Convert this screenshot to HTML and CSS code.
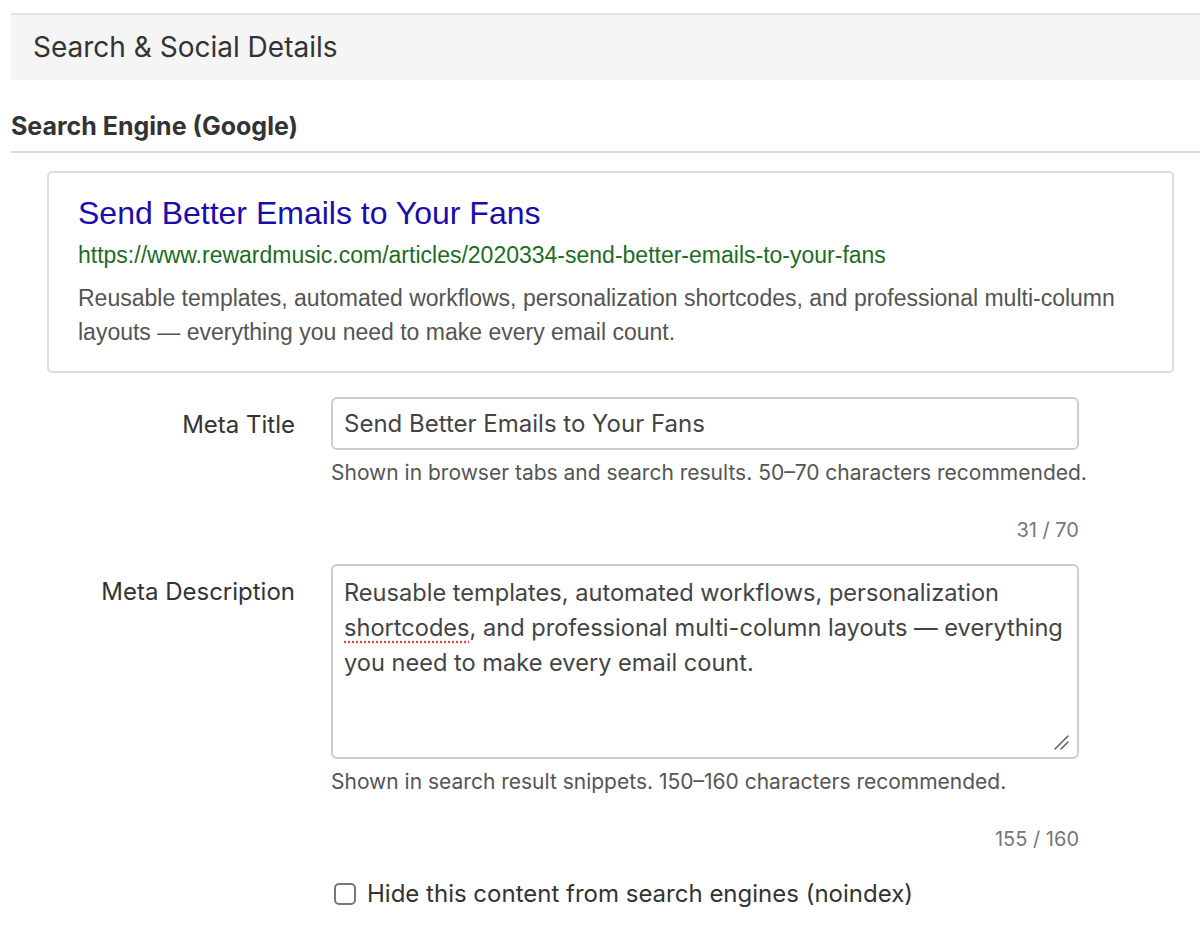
FILE: index.html
```html
<!DOCTYPE html>
<html lang="en">
<head>
<meta charset="utf-8">
<title>Search &amp; Social Details</title>
<link rel="stylesheet" href="styles.css">
</head>
<body>
<div class="page">
  <div class="panel-header">Search &amp; Social Details</div>
  <h3 class="section-title">Search Engine (Google)</h3>
  <div class="serp">
    <div class="serp-title">Send Better Emails to Your Fans</div>
    <div class="serp-url">https://www.rewardmusic.com/articles/2020334-send-better-emails-to-your-fans</div>
    <div class="serp-desc">Reusable templates, automated workflows, personalization shortcodes, and professional multi-column layouts — everything you need to make every email count.</div>
  </div>
  <div class="form">
    <div class="row">
      <label class="label" for="mt">Meta Title</label>
      <div class="field">
        <input id="mt" class="input" type="text" value="Send Better Emails to Your Fans">
        <div class="help">Shown in browser tabs and search results. 50–70 characters recommended.</div>
        <div class="counter">31 / 70</div>
      </div>
    </div>
    <div class="row">
      <label class="label" for="md">Meta Description</label>
      <div class="field">
        <div class="textarea">Reusable templates, automated workflows, personalization <span class="spell">shortcodes</span>, and professional multi-column layouts — everything you need to make every email count.<svg class="grip" width="16" height="16" viewBox="0 0 16 16"><path d="M2 15 L15 2 M8 15 L15 8" stroke="#666" stroke-width="1.6" fill="none" stroke-linecap="round"/></svg></div>
        <div class="help">Shown in search result snippets. 150–160 characters recommended.</div>
        <div class="counter">155 / 160</div>
      </div>
    </div>
    <div class="row">
      <div class="label-empty"></div>
      <label class="check"><span class="box"></span>Hide this content from search engines (noindex)</label>
    </div>
  </div>
</div>
</body>
</html>
```

FILE: styles.css
```css
html, body {
  margin: 0;
  padding: 0;
  background: #fff;
}
body {
  font-family: Inter, "Noto Sans", "Liberation Sans", sans-serif;
  color: #333;
}
.page {
  padding: 13px 0 0 11px;
}
.panel-header {
  border-top: 2px solid #e4e4e4;
  background: #f5f5f5;
  height: 67px;
  box-sizing: border-box;
  padding: 15px 0 0 22px;
  font-size: 28px;
  line-height: 34px;
  color: #333;
}
.section-title {
  margin: 31px 0 0 0;
  font-size: 25px;
  line-height: 30px;
  font-weight: 700;
  color: #333;
  padding-bottom: 10px;
  border-bottom: 2px solid #ddd;
}
.serp {
  margin: 18px 26px 0 36px;
  border: 2px solid #ddd;
  border-radius: 5px;
  padding: 22px 29px 22px 29px;
  font-family: "Liberation Sans", Arial, sans-serif;
}
.serp-title {
  color: #1a0dab;
  font-size: 32px;
  line-height: 36px;
}
.serp-url {
  color: #1e6b26;
  font-size: 23px;
  line-height: 28px;
  margin-top: 10px;
}
.serp-desc {
  color: #545454;
  font-size: 23px;
  line-height: 34px;
  margin-top: 12px;
}
.form {
  margin-top: 24px;
}
.row {
  display: grid;
  grid-template-columns: 284px 748px;
  column-gap: 36px;
}
.label {
  text-align: right;
  font-size: 24px;
  line-height: 30px;
  color: #333;
  padding-top: 13px;
}
.input {
  display: block;
  width: 748px;
  height: 53px;
  box-sizing: border-box;
  border: 2px solid #ccc;
  border-radius: 6px;
  padding: 0 11px;
  font-family: Inter, "Noto Sans", "Liberation Sans", sans-serif;
  font-size: 24px;
  color: #444;
  outline: none;
}
.textarea {
  position: relative;
  width: 748px;
  height: 195px;
  box-sizing: border-box;
  border: 2px solid #ccc;
  border-radius: 6px;
  padding: 9px 6px 9px 11px;
  font-size: 23.6px;
  line-height: 35px;
  color: #444;
}
.spell {
  text-decoration: underline dotted #e0443e;
  text-underline-offset: 5px;
}
.grip {
  position: absolute;
  right: 8px;
  bottom: 7px;
}
.help {
  margin-top: 9px;
  font-size: 21px;
  color: #555;
  line-height: 28px;
  white-space: nowrap;
}
.counter {
  text-align: right;
  font-size: 20px;
  color: #777;
  margin-top: 29px;
  margin-bottom: 20px;
  line-height: 28px;
}
.check {
  display: flex;
  align-items: center;
  gap: 11px;
  font-size: 24px;
  line-height: 30px;
  color: #333;
  padding-top: 6px;
  padding-left: 3px;
}
.box {
  width: 18px;
  height: 18px;
  border: 2px solid #777;
  border-radius: 5px;
  box-sizing: content-box;
}
```
